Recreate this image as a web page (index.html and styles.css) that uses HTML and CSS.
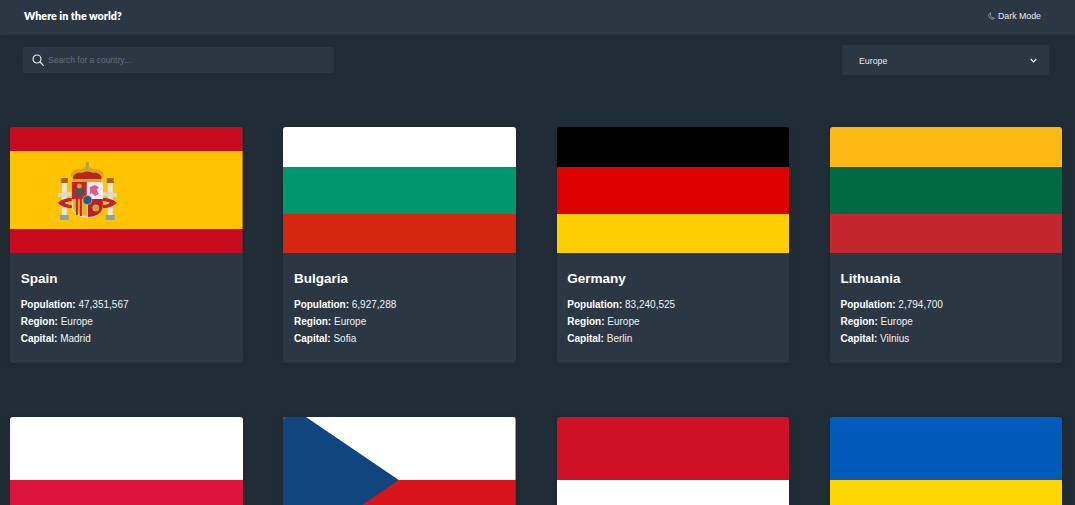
FILE: index.html
```html
<!DOCTYPE html>
<html lang="en">
  <head>
    <meta charset="UTF-8" />
    <meta name="viewport" content="width=device-width, initial-scale=1.0" />
    <title>Where in the world?</title>
    <link rel="stylesheet" href="styles.css">
  </head>
  <body>
    <header class="topbar">
      <h1 class="brand">Where in the world?</h1>
      <button class="theme-toggle" type="button">
        <svg class="moon" viewBox="0 0 8 9" width="7" height="8" fill="none" stroke="#aeb5bb" stroke-width="0.8">
          <path d="M3 .7C1.500 1.200 .7 2.600 .9 4.200 1.200 6.200 2.800 7.800 4.700 8c1.100.1 2.100-.3 2.800-1.100C5.200 7 3.500 5.800 3 3.900 2.800 2.900 2.700 1.700 3 .7Z" />
        </svg>
        Dark Mode
      </button>
    </header>

    <section class="toolbar">
      <label class="search">
        <svg viewBox="0 0 12 12" width="12" height="12" fill="none" stroke="#e6e8ea" stroke-width="1.2" stroke-linecap="round">
          <circle cx="5" cy="5" r="4" />
          <path d="M8 8l3.300 3.300" />
        </svg>
        <input type="text" placeholder="Search for a country..." />
      </label>
      <div class="filter">
        <span>Europe</span>
        <svg viewBox="0 0 8 5" width="7" height="5" fill="none" stroke="#f2f3f4" stroke-width="1.4">
          <path d="M.8 .8L4 4 7.200 .8" />
        </svg>
      </div>
    </section>

    <main class="countries">
      <!-- Row 1 -->
      <article class="card">
        <svg class="flag" viewBox="10 127 233 126" preserveAspectRatio="none">
          <rect x="10" y="127" width="233" height="126" fill="#c60b1e" />
          <rect x="10" y="151" width="233" height="78" fill="#ffc400" />
          <!-- pillars -->
          <rect x="62" y="183" width="5" height="32" fill="#e6e6dc" />
          <rect x="108" y="183" width="5" height="32" fill="#e6e6dc" />
          <rect x="60" y="215" width="9" height="5" fill="#86a4b0" />
          <rect x="106" y="215" width="9" height="5" fill="#86a4b0" />
          <rect x="61" y="178" width="7" height="5" fill="#a8641f" />
          <rect x="107" y="178" width="7" height="5" fill="#a8641f" />
          <path d="M58 193l14-1v4l-14 1Z" fill="#dcd9cc" />
          <path d="M117 193l-14-1v4l14 1Z" fill="#dcd9cc" />
          <path d="M58 203c2-3 8-5 14-5v3c-3 0-6 1-7 2 2 1 4 2 7 2v3c-6 0-11-2-14-5Z" fill="#c8202a" />
          <path d="M117 203c-2-3-8-5-14-5v3c3 0 6 1 7 2-2 1-4 2-7 2v3c6 0 11-2 14-5Z" fill="#c8202a" />
          <!-- crown -->
          <path d="M72 173c4-5 27-5 31 0l-2 8H74Z" fill="#b5261e" />
          <path d="M71 176c0-5 6-8 11-7 3-3 8-3 11 0 5-1 11 2 11 7l-2 3c0-4-4-7-9-6-3-2-8-2-11 0-5-1-9 2-9 6Z" fill="#d9a520" />
          <rect x="86" y="162" width="3" height="7" fill="#b8a03a" />
          <rect x="74" y="179" width="27" height="3" fill="#d9a520" />
          <!-- shield -->
          <path d="M72 182h31v24c0 8-8 12-15.500 12S72 214 72 206Z" fill="#e8e2d0" />
          <rect x="72" y="182" width="15" height="17" fill="#c8202a" />
          <rect x="87" y="183" width="16" height="16" fill="#f3edf0" />
          <path d="M73 199h14v17c-6 0-14-3-14-10Z" fill="#e3b22a" />
          <path d="M76 199h2v16h-2Zm4 0h2v17h-2Z" fill="#c8202a" />
          <path d="M88 199h15v7c0 7-7 11-15 11Z" fill="#b8202c" />
          <path d="M90 187l5-2 4 2-2 3 2 4-4 2-3-3-2 2Z" fill="#d0608e" />
          <path d="M76 187h7v9h-7Z" fill="#3f5a58" />
          <circle cx="79.500" cy="186" r="2.500" fill="#c9a030" />
          <circle cx="87.500" cy="200" r="5" fill="#d9a520" />
          <circle cx="87.500" cy="200" r="4" fill="#1f5a9e" />
          <circle cx="96" cy="208" r="3.500" fill="#d0a030" />
        </svg>
        <div class="card-body">
          <h2>Spain</h2>
          <p><strong>Population:</strong> 47,351,567</p>
          <p><strong>Region:</strong> Europe</p>
          <p><strong>Capital:</strong> Madrid</p>
        </div>
      </article>

      <article class="card">
        <div class="flag bands">
          <div class="band-top band-white"></div>
          <div class="band-mid bg-green"></div>
          <div class="band-low bg-red"></div>
        </div>
        <div class="card-body">
          <h2>Bulgaria</h2>
          <p><strong>Population:</strong> 6,927,288</p>
          <p><strong>Region:</strong> Europe</p>
          <p><strong>Capital:</strong> Sofia</p>
        </div>
      </article>

      <article class="card">
        <div class="flag bands">
          <div class="band-top de-black"></div>
          <div class="band-mid de-red"></div>
          <div class="band-low de-gold"></div>
        </div>
        <div class="card-body">
          <h2>Germany</h2>
          <p><strong>Population:</strong> 83,240,525</p>
          <p><strong>Region:</strong> Europe</p>
          <p><strong>Capital:</strong> Berlin</p>
        </div>
      </article>

      <article class="card">
        <div class="flag bands">
          <div class="band-top lt-gold"></div>
          <div class="band-mid lt-green"></div>
          <div class="band-low lt-red"></div>
        </div>
        <div class="card-body">
          <h2>Lithuania</h2>
          <p><strong>Population:</strong> 2,794,700</p>
          <p><strong>Region:</strong> Europe</p>
          <p><strong>Capital:</strong> Vilnius</p>
        </div>
      </article>

      <!-- Row 2, cut off by the window -->
      <article class="card">
        <div class="flag bands">
          <div class="band-half band-white"></div>
          <div class="band-half pl-red"></div>
        </div>
      </article>

      <article class="card">
        <svg class="flag" viewBox="0 0 233 126" preserveAspectRatio="none">
          <rect width="233" height="63" fill="#fff" />
          <rect y="63" width="233" height="63" fill="#d7141a" />
          <path d="M0 0H23L116 63 0 142Z" fill="#11457e" />
        </svg>
      </article>

      <article class="card">
        <div class="flag bands">
          <div class="band-half mc-red"></div>
          <div class="band-half band-white"></div>
        </div>
      </article>

      <article class="card">
        <div class="flag bands">
          <div class="band-half ua-blue"></div>
          <div class="band-half ua-yellow"></div>
        </div>
      </article>
    </main>
  </body>
</html>
```

FILE: styles.css
```css
html,
body {
  height: 505px;
  overflow: hidden;
}
body {
  margin: 0;
  background: #202c36;
  color: #fff;
  font-family: "Liberation Sans", Arial, sans-serif;
  font-size: 10px;
}
.topbar {
  height: 35px;
  padding: 0 34px 4px 24px;
  box-sizing: border-box;
  display: flex;
  align-items: center;
  justify-content: space-between;
  background: #2b3844;
  box-shadow: 0 1px 3px rgba(0, 0, 0, 0.1);
}
.brand {
  margin: 0;
  font-family: "Lato", sans-serif;
  font-size: 10.7px;
  font-weight: 800;
}
.theme-toggle {
  display: flex;
  align-items: center;
  gap: 3px;
  padding: 0;
  border: none;
  background: none;
  color: #e8eaec;
  font-family: inherit;
  font-size: 8.8px;
}
.toolbar {
  padding: 10px 26px 0 23px;
  display: flex;
  align-items: center;
  justify-content: space-between;
}
.search {
  width: 311px;
  height: 26px;
  padding-left: 9px;
  box-sizing: border-box;
  display: flex;
  align-items: center;
  gap: 4px;
  background: #2b3844;
  border-radius: 2px;
}
.search input {
  flex: 1;
  padding: 0;
  border: none;
  outline: none;
  background: none;
  color: #fff;
  font-family: inherit;
  font-size: 8.5px;
}
.search input::placeholder {
  color: #626d77;
}
.filter {
  width: 207px;
  height: 30px;
  padding: 1px 12px 0 17px;
  box-sizing: border-box;
  display: flex;
  align-items: center;
  justify-content: space-between;
  background: #2b3844;
  border-radius: 2px;
  font-size: 8.8px;
  color: #e8eaec;
}
.countries {
  height: 430px;
  padding: 52px 12.6px 0 10px;
  box-sizing: border-box;
  overflow: hidden;
  display: grid;
  grid-template-columns: repeat(4, 232.5px);
  grid-auto-rows: max-content;
  justify-content: space-between;
  row-gap: 54px;
}
.card {
  background: #2b3844;
  border-radius: 3px;
  overflow: hidden;
  box-shadow: 0 0 4px rgba(0, 0, 0, 0.1);
}
.flag {
  display: block;
  width: 100%;
  height: 126px;
}
.bands {
  display: flex;
  flex-direction: column;
}
.band-top { flex: 40; }
.band-mid { flex: 47; }
.band-low { flex: 39; }
.band-half { flex: 1; }
.card-body {
  height: 110px;
  padding: 17px 10.7px 0;
  box-sizing: border-box;
}
.card-body h2 {
  margin: 0 0 9px;
  font-size: 13.5px;
  line-height: 17px;
}
.card-body p {
  margin: 0;
  line-height: 17px;
  color: #f0f1f2;
}
.card-body strong {
  color: #fff;
}
.band-white { background: #fff; }
.bg-green { background: #00966e; }
.bg-red { background: #d62612; }
.de-black { background: #000; }
.de-red { background: #dd0000; }
.de-gold { background: #ffce00; }
.lt-gold { background: #fdb913; }
.lt-green { background: #006a44; }
.lt-red { background: #c1272d; }
.pl-red { background: #dc143c; }
.mc-red { background: #ce1126; }
.ua-blue { background: #005bbb; }
.ua-yellow { background: #ffd500; }
```
